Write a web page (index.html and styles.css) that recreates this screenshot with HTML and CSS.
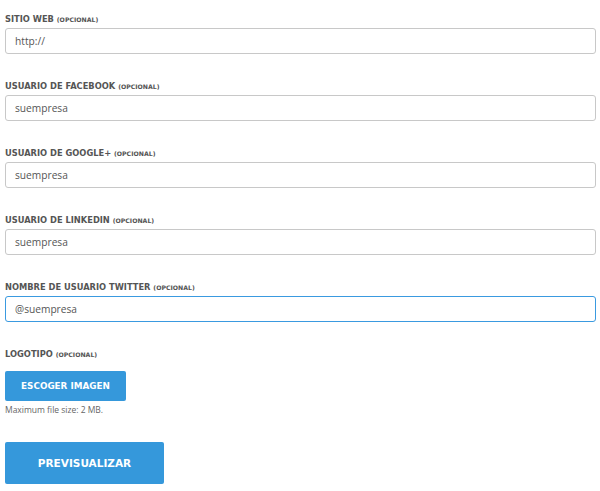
FILE: index.html
```html
<!DOCTYPE html>
<html lang="es">
<head>
<meta charset="utf-8">
<title>Formulario</title>
<link rel="stylesheet" href="styles.css">
</head>
<body>
<form class="form">
  <div class="field">
    <label class="label">Sitio web <span class="opt">(opcional)</span></label>
    <input class="input" type="text" value="http://">
  </div>
  <div class="field">
    <label class="label">Usuario de Facebook <span class="opt">(opcional)</span></label>
    <input class="input" type="text" value="suempresa">
  </div>
  <div class="field">
    <label class="label">Usuario de Google+ <span class="opt">(opcional)</span></label>
    <input class="input" type="text" value="suempresa">
  </div>
  <div class="field">
    <label class="label">Usuario de LinkedIn <span class="opt">(opcional)</span></label>
    <input class="input" type="text" value="suempresa">
  </div>
  <div class="field">
    <label class="label">Nombre de usuario Twitter <span class="opt">(opcional)</span></label>
    <input class="input input-focus" type="text" value="@suempresa">
  </div>
  <div class="field field-logo">
    <label class="label">Logotipo <span class="opt">(opcional)</span></label>
    <button type="button" class="btn btn-small">Escoger imagen</button>
    <div class="hint">Maximum file size: 2 MB.</div>
  </div>
  <button type="button" class="btn btn-big">Previsualizar</button>
</form>
</body>
</html>
```

FILE: styles.css
```css
html, body {
  margin: 0;
  padding: 0;
  background: #fff;
}
.form {
  padding: 13px 4px 0 5px;
  width: 591px;
  font-family: "Open Sans", "Liberation Sans", sans-serif;
}
.field {
  margin-bottom: 26px;
}
.label {
  display: block;
  font-family: "DejaVu Sans", sans-serif;
  font-weight: bold;
  font-size: 8.3px;
  line-height: 12px;
  height: 12px;
  color: #555;
  text-transform: uppercase;
  margin-bottom: 3px;
  white-space: nowrap;
}
.opt {
  font-size: 6.2px;
}
.input {
  display: block;
  box-sizing: border-box;
  width: 591px;
  height: 26px;
  margin: 0;
  padding: 0 9px;
  border: 1px solid #c8c8c8;
  border-radius: 3px;
  font-family: "Open Sans", sans-serif;
  font-size: 10.2px;
  color: #555;
  background: #fff;
  outline: none;
}
.input-focus {
  border-color: #3a9ae0;
}
.field-logo .label {
  margin-bottom: 11px;
}
.btn {
  display: block;
  border: none;
  margin: 0;
  padding: 0;
  background: #3598db;
  color: #fff;
  font-family: "DejaVu Sans", sans-serif;
  font-weight: bold;
  text-transform: uppercase;
  border-radius: 2px;
  cursor: pointer;
  white-space: nowrap;
}
.btn-small {
  width: 121px;
  height: 30px;
  font-size: 8.8px;
}
.hint {
  font-family: "Open Sans", sans-serif;
  font-size: 8.5px;
  line-height: 12px;
  color: #666;
  margin-top: 3px;
}
.field-logo {
  margin-bottom: 26px;
}
.btn-big {
  width: 159px;
  height: 42px;
  font-size: 10.5px;
}
```
